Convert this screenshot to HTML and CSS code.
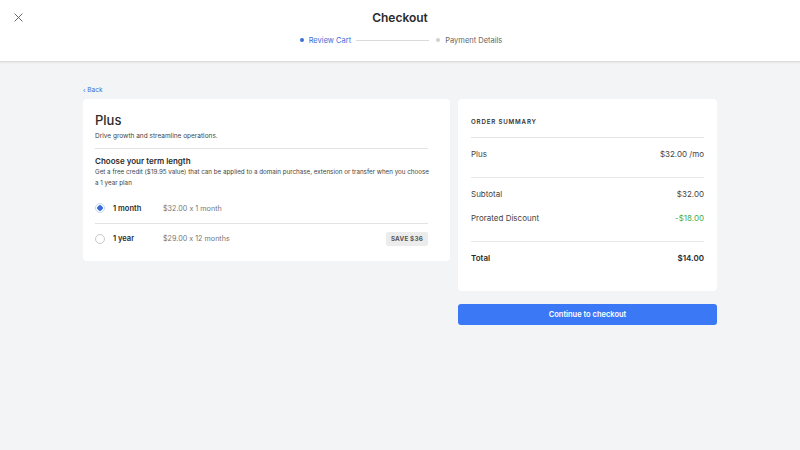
FILE: index.html
```html
<!DOCTYPE html>
<html>
<head>
<meta charset="utf-8">
<link rel="stylesheet" href="styles.css">
</head>
<body>
<header class="topbar">
  <button class="close" aria-label="Close">
    <svg width="9" height="9" viewBox="0 0 10 10"><path d="M1 1L9 9M9 1L1 9" stroke="#666" stroke-width="1.1" fill="none" stroke-linecap="round"/></svg>
  </button>
  <h1 class="title">Checkout</h1>
  <div class="stepper">
    <span class="dot active"></span>
    <span class="step active">Review Cart</span>
    <span class="line"></span>
    <span class="dot"></span>
    <span class="step">Payment Details</span>
  </div>
</header>
<main class="main">
  <a class="back" href="#">‹ Back</a>
  <div class="columns">
    <section class="card plan">
      <h2 class="plan-name">Plus</h2>
      <p class="plan-sub">Drive growth and streamline operations.</p>
      <hr class="rule">
      <h3 class="term-title">Choose your term length</h3>
      <p class="term-desc">Get a free credit ($19.95 value) that can be applied to a domain purchase, extension or transfer when you choose<br>a 1 year plan</p>
      <div class="options">
        <label class="option">
          <span class="radio checked"></span>
          <span class="opt-name">1 month</span>
          <span class="opt-price">$32.00 x 1 month</span>
        </label>
        <label class="option">
          <span class="radio"></span>
          <span class="opt-name">1 year</span>
          <span class="opt-price">$29.00 x 12 months</span>
          <span class="badge">SAVE $36</span>
        </label>
      </div>
    </section>
    <aside class="side">
      <section class="card summary">
        <div class="sum-head">ORDER SUMMARY</div>
        <div class="sum-block first">
          <div class="sum-row"><span>Plus</span><span>$32.00 /mo</span></div>
        </div>
        <div class="sum-block second">
          <div class="sum-row"><span>Subtotal</span><span>$32.00</span></div>
          <div class="sum-row"><span>Prorated Discount</span><span class="green">-$18.00</span></div>
        </div>
        <div class="sum-block total">
          <div class="sum-row bold"><span>Total</span><span>$14.00</span></div>
        </div>
      </section>
      <button class="cta">Continue to checkout</button>
    </aside>
  </div>
</main>
</body>
</html>
```

FILE: styles.css
```css
* { box-sizing: border-box; }
html, body { margin: 0; padding: 0; }
body {
  background: #f3f4f6;
  font-family: "Inter", "Open Sans", "Liberation Sans", sans-serif;
  font-feature-settings: "calt" 0;
  color: #333;
  width: 800px;
  height: 450px;
  overflow: hidden;
}
.topbar {
  position: relative;
  height: 62px;
  background: #fff;
  border-bottom: 1px solid #dcdcdc;
  box-shadow: 0 1px 2px rgba(0,0,0,0.06);
  display: flex;
  flex-direction: column;
  align-items: center;
}
.close {
  position: absolute;
  left: 14px;
  top: 13px;
  width: 9px;
  height: 9px;
  padding: 0;
  border: 0;
  background: none;
  display: flex;
}
.title {
  margin: 10px 0 0;
  font-size: 12px;
  line-height: 15px;
  font-weight: 600;
  color: #2b2b2b;
}
.stepper {
  margin-top: 9px;
  display: flex;
  align-items: center;
  margin-left: 2px;
  height: 12px;
}
.dot {
  width: 4px;
  height: 4px;
  border-radius: 50%;
  background: #d0d0d0;
  margin-right: 5px;
}
.dot.active { background: #3a6fd8; }
.step {
  font-size: 7.5px;
  color: #666;
}
.step.active { color: #3a6fd8; }
.line {
  width: 73px;
  height: 1px;
  background: #dadada;
  margin: 0 7px 0 5px;
}
.main {
  width: 634px;
  margin: 0 auto;
  padding-top: 24px;
}
.back {
  display: block;
  font-size: 6.5px;
  line-height: 9px;
  color: #3a6fd8;
  text-decoration: none;
}
.columns {
  margin-top: 4px;
  display: flex;
  gap: 8px;
  align-items: flex-start;
}
.card {
  background: #fff;
  border-radius: 4px;
}
.plan {
  width: 367px;
  padding: 13px 22px 8px 12px;
}
.plan-name {
  margin: 0;
  font-size: 13px;
  line-height: 17px;
  font-weight: 500;
  color: #2b2b2b;
}
.plan-sub {
  margin: 2px 0 0;
  font-size: 6.5px;
  line-height: 10px;
  color: #444;
}
.rule {
  border: 0;
  height: 1px;
  background: #e3e3e3;
  margin: 7px 0 0;
}
.term-title {
  margin: 7px 0 0;
  font-size: 8px;
  line-height: 11px;
  font-weight: 600;
  color: #2b2b2b;
}
.term-desc {
  margin: 0;
  font-size: 6.25px;
  line-height: 11px;
  color: #444;
  white-space: nowrap;
}
.options { margin-top: 4px; }
.option {
  display: flex;
  align-items: center;
  height: 30px;
}
.option + .option { border-top: 1px solid #e3e3e3; }
.radio {
  width: 10px;
  height: 10px;
  border-radius: 50%;
  border: 1px solid #c8c8c8;
  margin-right: 8px;
  flex: none;
}
.radio.checked {
  border-color: #c9d6f2;
  background: radial-gradient(circle, #3a6fd8 0 2.5px, #fff 3px);
}
.opt-name {
  width: 50px;
  font-size: 7.5px;
  font-weight: 600;
  color: #2b2b2b;
}
.opt-price {
  font-size: 7.2px;
  color: #777;
}
.badge {
  margin-left: auto;
  background: #ececec;
  color: #555;
  font-size: 6.3px;
  font-weight: 700;
  padding: 3px 5px;
  border-radius: 2px;
  letter-spacing: 0.2px;
}
.side { width: 259px; }
.summary { padding: 17px 13px 27px; }
.sum-head {
  font-size: 6.2px;
  line-height: 12px;
  font-weight: 600;
  letter-spacing: 0.8px;
  color: #333;
  padding-bottom: 9px;
  border-bottom: 1px solid #e3e3e3;
}
.sum-row {
  display: flex;
  justify-content: space-between;
  font-size: 8px;
  line-height: 12px;
  color: #444;
}
.sum-block.first {
  padding: 10px 0 17px;
  border-bottom: 1px solid #e8e8e8;
}
.sum-block.second {
  padding: 10px 0 17px;
  border-bottom: 1px solid #e8e8e8;
  display: flex;
  flex-direction: column;
  gap: 12px;
}
.sum-block.total { padding-top: 10px; }
.sum-row.bold { font-weight: 600; color: #2b2b2b; }
.green { color: #3fae4a; }
.cta {
  display: block;
  width: 100%;
  margin-top: 13px;
  height: 21px;
  border: 0;
  border-radius: 3px;
  background: #3b78f6;
  color: #fff;
  font-family: inherit;
  font-size: 7.5px;
  font-weight: 600;
}
```
